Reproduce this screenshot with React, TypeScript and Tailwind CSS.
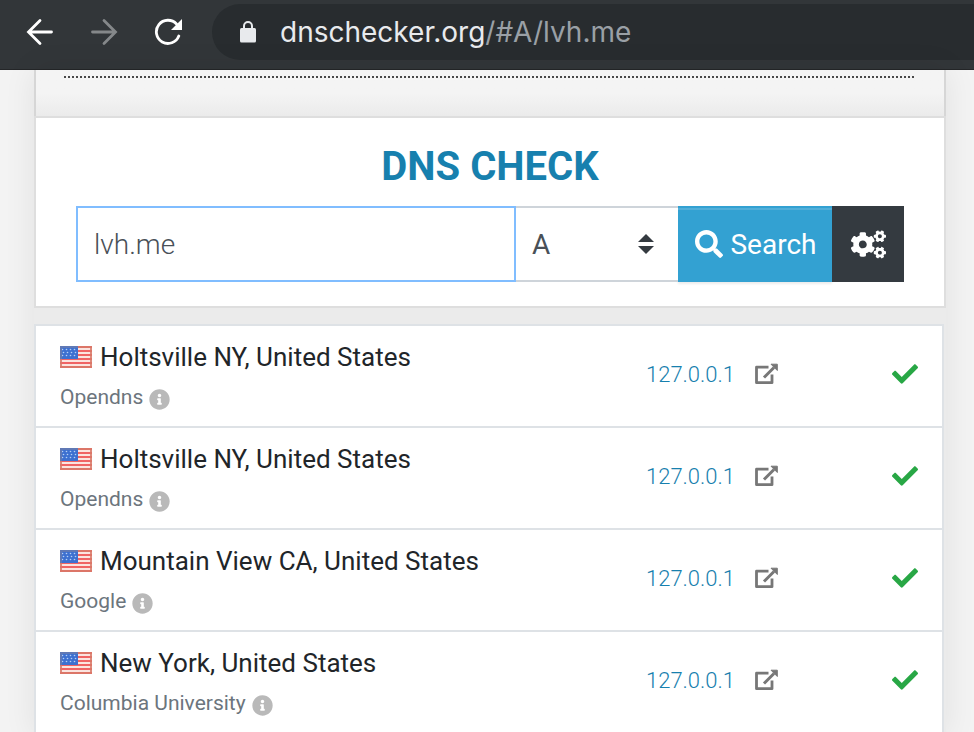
import { useState } from "react";
import { FaCheck, FaCogs, FaInfoCircle, FaSearch } from "react-icons/fa";

const servers = [
  { place: "Holtsville NY, United States", provider: "Opendns", ip: "127.0.0.1" },
  { place: "Holtsville NY, United States", provider: "Opendns", ip: "127.0.0.1" },
  { place: "Mountain View CA, United States", provider: "Google", ip: "127.0.0.1" },
  { place: "New York, United States", provider: "Columbia University", ip: "127.0.0.1" },
];

function Arrow({ flip }: { flip?: boolean }) {
  return (
    <svg viewBox="0 0 28 28" className={flip ? "size-7 rotate-180" : "size-7"} fill="none" stroke="currentColor" strokeWidth="2.800" strokeLinecap="round" aria-hidden="true">
      <path d="M25.500 14H3M14 2.500 2.500 14 14 25.500" />
    </svg>
  );
}

function Reload() {
  return (
    <svg viewBox="0 0 28 28" className="size-7" aria-hidden="true">
      <path d="M24.800 18A11.600 11.600 0 1 1 22.500 6" fill="none" stroke="currentColor" strokeWidth="2.800" strokeLinecap="round" />
      <path d="M28 1v11H17z" fill="currentColor" />
    </svg>
  );
}

function Lock() {
  return (
    <svg viewBox="0 0 16 22" className="h-[22px] w-4" aria-hidden="true">
      <path d="M4 8V5a4 4 0 0 1 8 0V8" fill="none" stroke="currentColor" strokeWidth="2" />
      <rect y="7" width="16" height="14.500" rx="1.500" fill="currentColor" />
    </svg>
  );
}

function Flag() {
  return (
    <svg viewBox="0 0 32 22" className="h-[22px] w-8 shrink-0" role="img" aria-label="United States">
      <rect width="32" height="22" fill="#fbe4df" />
      {[0, 4, 8, 12, 16, 20].map((y) => (
        <rect key={y} y={y} width="32" height="2" fill="#f06464" />
      ))}
      <rect width="18" height="13" fill="#3d70d0" />
      {[3, 6, 9].map((y, row) =>
        [3, 7, 11, 15].map((x) => (
          <circle key={`${x}-${y}`} cx={x + (row % 2) - 0.5} cy={y + 0.5} r="0.8" fill="#b5cff5" />
        )),
      )}
      <rect x="1" y="1" width="30" height="20" fill="none" stroke="#fff" strokeOpacity=".2" strokeWidth="2" />
      <path d="M1 13V1H18" fill="none" stroke="#6079b5" strokeWidth="2" />
      <path d="M18 1h13v20H1V13" fill="none" stroke="#d67362" strokeWidth="2" strokeOpacity=".8" />
    </svg>
  );
}

function OpenExternal() {
  return (
    <svg viewBox="0 0 24 22" className="h-[22px] w-6" aria-hidden="true">
      <path d="M13.500 4.200H1.500v15.500h15.500V11.500" fill="none" stroke="currentColor" strokeWidth="2.800" strokeLinejoin="round" />
      <path d="M9 14.500 19 4.500" fill="none" stroke="currentColor" strokeWidth="3" />
      <path d="M16 1.200h6.300V7.500z" fill="currentColor" stroke="currentColor" strokeLinejoin="round" />
    </svg>
  );
}

export default function App() {
  const [domain, setDomain] = useState("lvh.me");
  return (
    <div className="flex h-screen flex-col overflow-hidden bg-[#f3f3f3] font-[Roboto,sans-serif]">
      <header className="flex h-[70px] shrink-0 items-center border-b border-[#242628] bg-[#323639] pb-1.5 pl-[26px] text-white">
        <nav className="flex gap-9" aria-label="Browser navigation">
          <button type="button" aria-label="Back"><Arrow /></button>
          <button type="button" aria-label="Forward" className="text-[#85888a]"><Arrow flip /></button>
          <button type="button" aria-label="Reload"><Reload /></button>
        </nav>
        <div className="ml-[30px] flex h-14 flex-1 items-center gap-6 rounded-l-full bg-[#282c2f] pl-7 text-[#e8eaed]">
          <Lock />
          <p className="font-[Inter,sans-serif] text-[28px] leading-8">
            dnschecker.org<span className="text-[#9aa0a6]">/#A/lvh.me</span>
          </p>
        </div>
      </header>

      <main className="mr-7 ml-[34px] flex-1 shadow-[0_0_30px_rgba(0,0,0,0.08)]">
        <div className="h-[46px] border-x-2 border-[#d6d6d6] bg-linear-to-b from-[#f4f4f4] from-50% to-[#ebebeb] px-7 pt-1.5">
          <div className="h-0.5 bg-[repeating-linear-gradient(90deg,#484848_0_2px,transparent_2px_4px)]" />
        </div>

        <section className="border-2 border-[#dedede] bg-white px-10 pt-[25px] pb-6">
          <h1 className="text-center text-[40px] leading-12 font-bold text-[#1780ae]">DNS CHECK</h1>
          <form className="mt-[15px] flex h-[76px] text-[28px]" onSubmit={(e) => e.preventDefault()}>
            <input
              aria-label="Domain"
              value={domain}
              onChange={(e) => setDomain(e.target.value)}
              className="w-[440px] min-w-0 border-2 border-[#80bdff] px-4 pt-0.5 font-light text-[#495057] outline-none"
            />
            <div className="relative flex-1">
              <select aria-label="Record type" className="size-full appearance-none border-y-2 border-[#ced4da] bg-white px-4 pt-0.5 text-[#495057] outline-none">
                <option>A</option>
                <option>AAAA</option>
                <option>CNAME</option>
                <option>MX</option>
              </select>
              <svg viewBox="0 0 16 20" className="pointer-events-none absolute inset-y-0 right-6 my-auto h-5 w-4 fill-[#343a40]" aria-hidden="true">
                <path d="M0 8 8 0l8 8zM0 12h16l-8 8z" />
              </svg>
            </div>
            <button type="submit" className="flex w-[154px] items-center justify-center gap-[7px] bg-[#33a1d2] pt-0.5 pl-0.5 text-white shadow-[inset_0_2px_0_#33a1d2,inset_0_4px_0_#52afd9,0_2px_2px_rgba(0,0,0,0.08)]">
              <FaSearch className="mb-0.5 size-7" />
              Search
            </button>
            <button type="button" aria-label="Settings" className="flex w-[72px] items-center justify-center bg-[#343a40] text-white">
              <FaCogs className="size-[35px]" />
            </button>
          </form>
        </section>

        <div className="bg-[#ebebeb] pt-4 pr-0.5">
          <ul className="border-2 border-[#dee2e6] bg-white">
            {servers.map((s, i) => (
              <li key={i} className="flex h-[102px] items-center border-b-2 border-[#dee2e6] px-6">
                <div className="flex-1 pt-0.5">
                  <div className="flex items-center gap-2 text-[26px] leading-10 text-[#212529]">
                    <Flag />
                    {s.place}
                  </div>
                  <div className="flex items-center gap-1.5 text-[21px] leading-10 text-[#6c757d]">
                    {s.provider}
                    <FaInfoCircle className="mt-1 size-[21px] text-[#b9b9b9]" />
                  </div>
                </div>
                <div className="flex w-[246px] items-center gap-5 pb-1">
                  <span className="text-[22px] font-light text-[#1780ae]">{s.ip}</span>
                  <a href="#details" aria-label={`Details for ${s.ip}`} className="text-[#777777]"><OpenExternal /></a>
                </div>
                <FaCheck className="mb-1 size-[26px] text-[#28a745]" aria-label="Resolved" />
              </li>
            ))}
          </ul>
        </div>
      </main>
    </div>
  );
}
